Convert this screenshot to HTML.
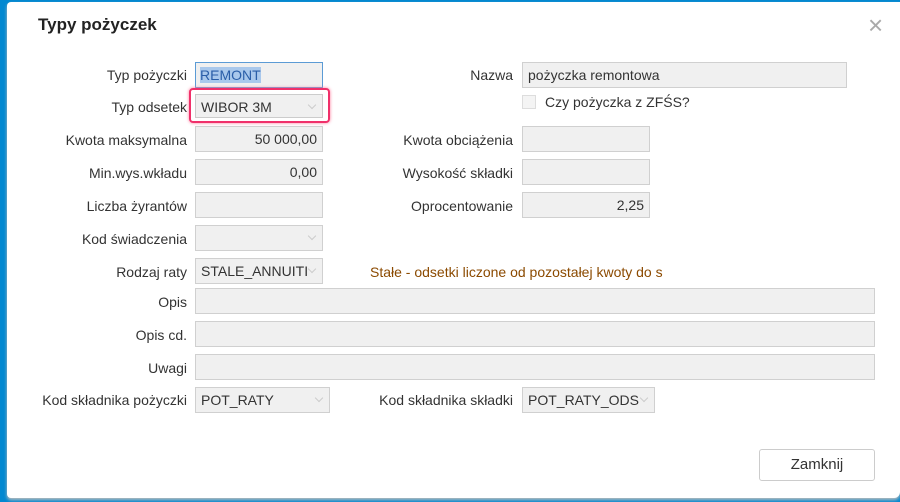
<!DOCTYPE html>
<html><head><meta charset="utf-8"><style>
body{margin:0;width:900px;height:502px;background:#0288d1;font-family:"Liberation Sans",sans-serif;font-size:14px;color:#333;overflow:hidden;position:relative}
.dlg{position:absolute;left:7px;top:2px;width:893px;height:496px;background:#fff;border-radius:4px 0 6px 4px;box-shadow:0 2px 3px #bbb}
.t{position:absolute;left:38px;top:15px;font-size:17px;font-weight:bold;color:#222}
.x{position:absolute;left:868px;top:10px;font-size:26px;color:#aaa;font-weight:300}
.l{position:absolute;text-align:right;white-space:nowrap}
.f{position:absolute;box-sizing:border-box;height:26px;background:#f0f0f0;border:1px solid #d0d0d0;padding:4px 5px;white-space:nowrap;overflow:hidden}
.r{text-align:right}
.c::after{content:"";position:absolute;right:7px;top:7px;width:5px;height:5px;border-right:1px solid #ccc;border-bottom:1px solid #ccc;transform:rotate(45deg)}
</style></head><body>
<div class="dlg"></div>
<div class="t">Typy pożyczek</div>
<div class="x">×</div>

<div class="l" style="right:713px;top:67px">Typ pożyczki</div>
<div class="f" style="left:195px;top:62px;width:128px;border-color:#5b9bd5;padding-left:4px"><span style="background:#a9c8ec;color:#2a5ea8">REMONT</span></div>
<div class="l" style="right:713px;top:99px">Typ odsetek</div>
<div style="position:absolute;left:189px;top:88px;width:137px;height:31px;border:2px solid #f0306a;border-radius:4px;box-shadow:0 0 3px #f79"></div>
<div class="f c" style="left:195px;top:94px;width:128px;height:24px;border-color:#ccc">WIBOR 3M</div>
<div class="l" style="right:713px;top:132px">Kwota maksymalna</div>
<div class="f r" style="left:195px;top:126px;width:128px">50 000,00</div>
<div class="l" style="right:713px;top:165px">Min.wys.wkładu</div>
<div class="f r" style="left:195px;top:159px;width:128px">0,00</div>
<div class="l" style="right:713px;top:198px">Liczba żyrantów</div>
<div class="f" style="left:195px;top:192px;width:128px"></div>
<div class="l" style="right:713px;top:231px">Kod świadczenia</div>
<div class="f c" style="left:195px;top:225px;width:128px"></div>
<div class="l" style="right:713px;top:264px">Rodzaj raty</div>
<div class="f c" style="left:195px;top:258px;width:128px">STALE_ANNUITI</div>
<div class="l" style="left:370px;top:264px;color:#8b4a00;text-align:left">Stałe - odsetki liczone od pozostałej kwoty do s</div>
<div class="l" style="right:713px;top:294px">Opis</div>
<div class="f" style="left:195px;top:288px;width:680px"></div>
<div class="l" style="right:713px;top:327px">Opis cd.</div>
<div class="f" style="left:195px;top:321px;width:680px"></div>
<div class="l" style="right:713px;top:360px">Uwagi</div>
<div class="f" style="left:195px;top:354px;width:680px"></div>
<div class="l" style="right:713px;top:392px">Kod składnika pożyczki</div>
<div class="f c" style="left:195px;top:387px;width:135px">POT_RATY</div>

<div class="l" style="right:387px;top:67px">Nazwa</div>
<div class="f" style="left:522px;top:62px;width:325px">pożyczka remontowa</div>
<div style="position:absolute;left:522px;top:95px;width:12px;height:12px;border:1px solid #ddd;background:#f4f4f4"></div>
<div class="l" style="left:545px;top:94px">Czy pożyczka z ZFŚS?</div>
<div class="l" style="right:387px;top:132px">Kwota obciążenia</div>
<div class="f" style="left:522px;top:126px;width:128px"></div>
<div class="l" style="right:387px;top:165px">Wysokość składki</div>
<div class="f" style="left:522px;top:159px;width:128px"></div>
<div class="l" style="right:387px;top:198px">Oprocentowanie</div>
<div class="f r" style="left:522px;top:192px;width:128px">2,25</div>
<div class="l" style="right:387px;top:392px">Kod składnika składki</div>
<div class="f c" style="left:522px;top:387px;width:133px">POT_RATY_ODS</div>

<div style="position:absolute;left:759px;top:449px;width:116px;height:32px;box-sizing:border-box;border:1px solid #ccc;border-radius:3px;text-align:center;line-height:30px;font-size:15px;color:#333">Zamknij</div>
</body></html>
